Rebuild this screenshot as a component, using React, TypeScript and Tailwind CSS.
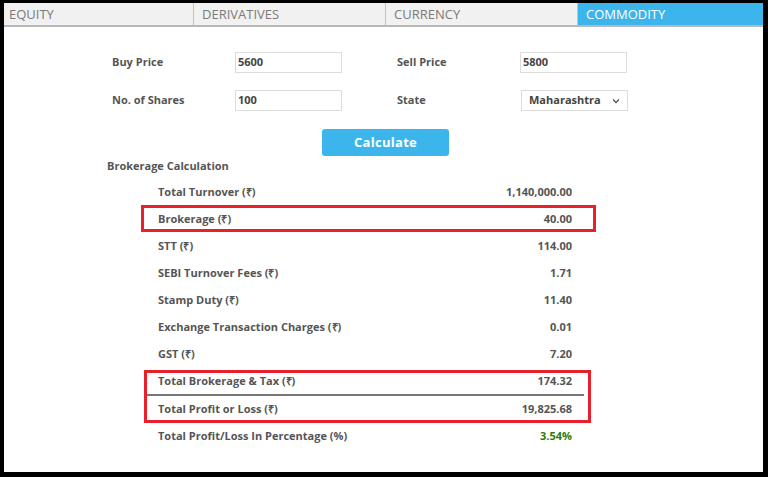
import React from "react"

const tabs = [
	{ name: "EQUITY", width: "w-[189px]", pad: "pl-[5px]", active: false },
	{ name: "DERIVATIVES", width: "w-[192px]", pad: "pl-[8px]", active: false },
	{ name: "CURRENCY", width: "w-[192px]", pad: "pl-[8px]", active: false },
	{ name: "COMMODITY", width: "flex-1", pad: "pl-[8px]", active: true },
]

const rows = [
	{ label: "Total Turnover (₹)", value: "1,140,000.00" },
	{ label: "Brokerage (₹)", value: "40.00" },
	{ label: "STT (₹)", value: "114.00" },
	{ label: "SEBI Turnover Fees (₹)", value: "1.71" },
	{ label: "Stamp Duty (₹)", value: "11.40" },
	{ label: "Exchange Transaction Charges (₹)", value: "0.01" },
	{ label: "GST (₹)", value: "7.20" },
]

function Field({ label, value }: { label: string; value: string }) {
	return (
		<div className="flex items-center">
			<span className="w-[123px] text-[11px] font-bold text-[#555]">{label}</span>
			<div className="w-[107px] h-[21px] border border-[#dcdcdc] pl-[2px] flex items-center text-[11px] font-bold text-[#444]">
				{value}
			</div>
		</div>
	)
}

function Row({
	label,
	value,
	valueClass = "text-[#555]",
	line = false,
	extra = "",
}: {
	label: string
	value: string
	valueClass?: string
	line?: boolean
	extra?: string
}) {
	return (
		<div
			className={`flex items-center justify-between h-[27px] pl-[11px] pr-[12px] ${extra} ${
				line ? "border-b-2 border-[#777]" : ""
			}`}
		>
			<span className="text-[11px] font-bold text-[#555]">{label}</span>
			<span className={`text-[11px] font-bold ${valueClass}`}>{value}</span>
		</div>
	)
}

export default function App() {
	return (
		<div className="w-[768px] h-[477px] bg-black pt-[3px] pl-[4px] pr-[5px] pb-[5px] font-['Open_Sans',sans-serif]">
			<div className="h-full bg-white flex flex-col">
				{/* Tabs */}
				<div className="flex h-[24px] border-b-2 border-[#b8b8b8]">
					{tabs.map((tab, i) => (
						<div
							key={tab.name}
							className={`${tab.width} ${tab.pad} flex items-center text-[13px] leading-none ${
								i > 0 ? "border-l border-[#c4c4c4]" : ""
							} ${tab.active ? "bg-[#3cb5ec] text-white" : "bg-[#f1f1f1] text-[#7a7a7a]"}`}
						>
							{tab.name}
						</div>
					))}
				</div>

				{/* Inputs */}
				<div className="ml-[108px] mt-[25px] flex flex-col gap-[17px]">
					<div className="flex">
						<Field label="Buy Price" value="5600" />
						<div className="ml-[55px]">
							<Field label="Sell Price" value="5800" />
						</div>
					</div>
					<div className="flex">
						<Field label="No. of Shares" value="100" />
						<div className="ml-[55px] flex items-center">
							<span className="w-[124px] text-[11px] font-bold text-[#555]">State</span>
							<div className="w-[107px] h-[21px] border border-[#dcdcdc] pl-[7px] pr-[7px] flex items-center justify-between text-[11px] font-bold text-[#444]">
								<span>Maharashtra</span>
								<svg width="8" height="6" viewBox="0 0 8 6" fill="none">
									<path d="M1 1.5l3 3 3-3" stroke="#555" strokeWidth="1.3" />
								</svg>
							</div>
						</div>
					</div>
				</div>

				<button className="ml-[318px] mt-[18px] w-[127px] h-[27px] rounded-[3px] bg-[#3cb5ec] text-white text-[13px] font-bold tracking-[0.3px]">
					Calculate
				</button>

				<div className="ml-[103px] mt-[1px] h-[17px] text-[11px] font-bold text-[#555] leading-[17px]">
					Brokerage Calculation
				</div>

				{/* Results */}
				<div className="relative ml-[143px] mt-[5px] w-[437px] flex flex-col">
					{rows.map((r) => (
						<Row key={r.label} label={r.label} value={r.value} />
					))}
					<Row label="Total Brokerage & Tax (₹)" value="174.32" line extra="mt-[1px]" />
					<Row label="Total Profit or Loss (₹)" value="19,825.68" />
					<Row label="Total Profit/Loss In Percentage (%)" value="3.54%" valueClass="text-[#2a7d10]" />

					{/* annotation boxes */}
					<div className="absolute left-[-6px] top-[26px] w-[455px] h-[27px] border-[3px] border-[#e8202a] pointer-events-none" />
					<div className="absolute left-[-3px] top-[191px] w-[447px] h-[53px] border-[3px] border-[#e8202a] pointer-events-none" />
				</div>
			</div>
		</div>
	)
}
